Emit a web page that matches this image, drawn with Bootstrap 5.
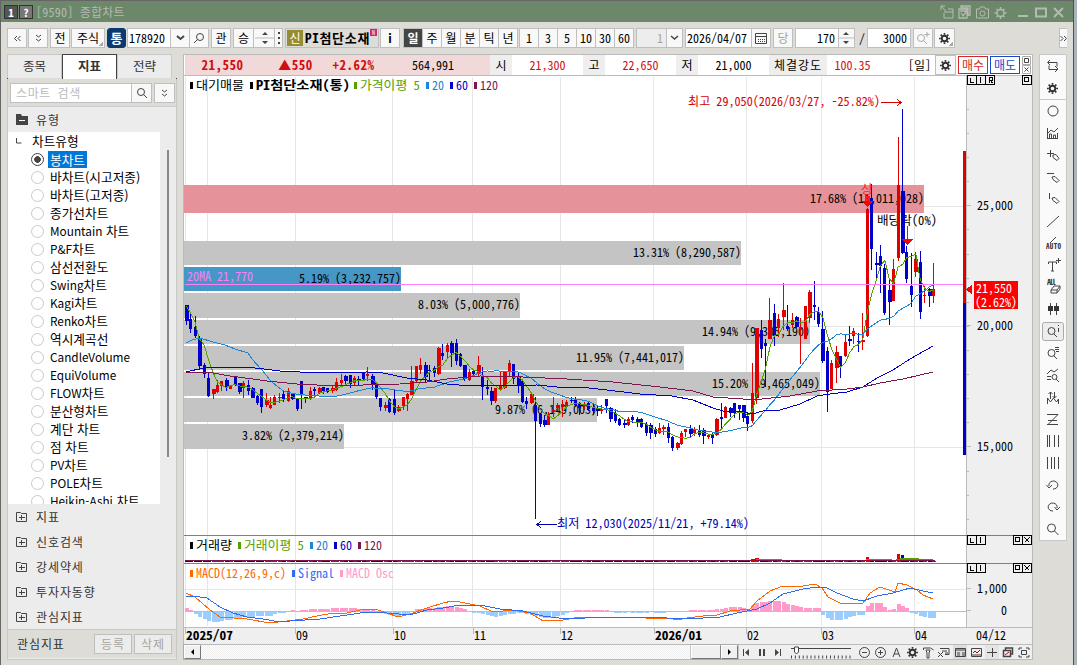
<!DOCTYPE html>
<html lang="ko">
<head>
    <meta charset="UTF-8">
    <meta name="viewport" content="width=device-width, initial-scale=1.0">
    <title>[9590] 종합차트</title>
    <link href="https://cdn.jsdelivr.net/npm/bootstrap@5.3.0/dist/css/bootstrap.min.css" rel="stylesheet">
    <style>
        body {
            width: 1077px;
            height: 665px;
            overflow: hidden;
            background: #dddcd6;
            color: #000;
            font: 12px/14px "Noto Sans CJK KR", "Liberation Sans", sans-serif;
            font-feature-settings: "hwid";
        }
        .window { height: 665px; border-left: 1px solid #666; border-top: 1px solid #666; }
        .edge { width: 4px; background: #a9b3ba; border-left: 1px solid #4b5257; }
        .titlebar { height: 21px; background: #6c876a; color: #b4bcb2; padding-left: 3px; }
        .sq { width: 14px; height: 14px; margin-right: 1px; background: #555; border: 1px solid #333; color: #fff; font-weight: bold; font-size: 11px; line-height: 12px; text-align: center; }
        .sq.q { background: #777; }
        .caption { margin-left: 2px; letter-spacing: .25px; }
        .title-icons { width: 130px; height: 20px; margin-right: 5px; }
        svg { display: block; fill: none; stroke: #444; stroke-width: 1; }

        /* toolbar */
        .tools {
            display: grid;
            grid-template-columns: 21px 22px 21px 36px 20px 84px 22px 20px 21px 11px 95px 23px 116px 117px 49px 88px 22px 62px 10px 46px 21px 125px 8px;
            padding: 6px 0 0 6px;
            height: 32px;
        }
        .tool, .tgroup { height: 20px; margin-right: 1px; background: #f8f8f8; border: 1px solid #bfbfbf; display: flex; align-items: center; justify-content: center; white-space: nowrap; }
        .tgroup > span { flex: 1; height: 18px; line-height: 17px; text-align: center; border-left: 1px solid #bfbfbf; }
        .tgroup > span:first-child { border-left: 0; }
        .tgroup > .on { background: #444; color: #fff; font-weight: bold; }
        .g2 { margin-right: 2px; }
        .g3 { margin-right: 3px; }
        .noline { border-right: 0; margin-right: 0; }
        .tong { background: #0b3a70; color: #fff; border-color: #0b3a70; border-radius: 3px; font-size: 13px; font-weight: bold; }
        .corner { background: linear-gradient(135deg, transparent 50%, #aaa 50%) right 1px bottom 1px/4px 4px no-repeat #f8f8f8; }
        .field { flex: 1; height: 18px; padding: 0 3px 0 1px; background: #fff; line-height: 17px; }
        .field.dim { background: #ededed; }
        .seg { width: 19px; height: 18px; border-left: 1px solid #bfbfbf; display: flex; align-items: center; justify-content: center; }
        .seg.slim { width: 16px; }
        .stock { background: #dddcd6; justify-content: flex-start; }
        .stock b { font-size: 13px; letter-spacing: .7px; }
        .sin { width: 16px; height: 16px; margin: 0 2px 0 1px; background: #978c33; color: #fff; line-height: 15px; text-align: center; }
        .newmark { width: 7px; height: 7px; background: #d6246e; color: #fff; font-size: 6px; line-height: 7px; text-align: center; align-self: flex-start; }
        .off { color: #a8a69c; }

        /* left panel */
        .side { width: 170px; margin-left: 6px; height: 606px; border: 1px solid #c8c8c8; background: #ececec; }
        .side-tabs { height: 25px; border-bottom: 1px solid #444; background: #dddcd6; margin: -1px; }
        .side-tab { width: 55px; height: 24px; border: 1px solid #c8c8c8; border-bottom: 0; background: #ececec; text-align: center; line-height: 22px; font-size: 12.5px; color: #333; }
        .side-tab.sel { height: 25px; background: #fff; border-color: #444; font-weight: bold; }
        .search { height: 29px; background: #dddcd6; padding: 5px 0 0 2px; border-bottom: 1px solid #ccc; }
        .search .tool { width: 21px; }
        .search .ph { width: 121px; margin: 0; justify-content: flex-start; background: #fff; color: #bbb; padding-left: 5px; border-right: 0; letter-spacing: .6px; }
        .cat { height: 25px; padding-left: 8px; gap: 8px; color: #333; letter-spacing: .9px; }
        .tree { height: 372px; overflow: hidden; }
        .tree-list { width: 152px; background: #fff; font-size: 12.7px; line-height: 18px; font-feature-settings: normal; }
        .tree-list em { font-style: normal; font-size: 11.8px; }
        .node { height: 18px; padding-left: 23px; gap: 4px; white-space: nowrap; }
        .node i { width: 13px; height: 13px; border: 1px solid #c9c9c9; border-radius: 50%; }
        .node.sel i { border-color: #444; background: radial-gradient(#444 0 3px, #fff 3.6px); }
        .node span { padding: 0 2px; }
        .node.sel span { background: #0078d7; color: #fff; line-height: 17px; }
        .thumb { width: 2px; height: 307px; margin: 18px 0 0 7px; background: #888; }
        .side-foot { height: 29px; border-top: 1px solid #c8c8c8; background: #dddcd6; padding: 0 4px 0 9px; color: #333; letter-spacing: .9px; }
        .side-foot .tool { width: 38px; margin: 0 0 0 2px; background: #ececec; }

        /* chart column */
        .chart { width: 850px; margin-left: 6px; }
        .quote { height: 22px; border: 1px solid #bbb; background: #fff; line-height: 19px; padding-left: 1px; }
        .quote > span { height: 20px; text-align: center; }
        .pinkbar { width: 305px; background: #f1d9d9; display: grid; grid-template-columns: 75px 71px 45px 114px; }
        .up { color: #d20f0f; }
        .pinkbar b { font-size: 13px; letter-spacing: .5px; white-space: nowrap; }
        .lab { width: 22px; background: #eee; }
        .lab.wide { width: 58px; letter-spacing: .9px; }
        .val { width: 71px; }
        .val2 { width: 51px; }
        .qbtn { width: 30px; height: 18px; margin: 1px 0 0 2px; border: 1px solid; line-height: 15px; background: #fff; text-align: center; }
        .buy { color: #d22828; }
        .sell { color: #1c46d0; }
        .strip { height: 15px; background: #efefef; border: 1px solid #bbb; border-top: 0; }
        .sbtn { width: 17px; height: 14px; background: #f0f0f0; border: 1px solid #fff; border-right-color: #777; border-bottom-color: #777; box-shadow: 0 0 0 .5px #999; }
        .sbtn.long { width: 30px; }
        .track { width: 490px; height: 14px; background: repeating-conic-gradient(#fff 0 25%, #ececec 0 50%) 0 0/2px 2px; }
        #plot text { stroke: none; fill: #000; font-size: 12.5px; white-space: pre; }
        #plot { shape-rendering: crispEdges; overflow: visible; }

        /* right icon bar */
        .rail { width: 28px; height: 487px; margin-left: 6px; background: #fafafa; border: 1px solid #c8c8c8; }
    </style>
</head>
<body>
<div class="d-flex">
    <div class="window flex-grow-1">
        <!-- Title bar -->
        <div class="titlebar d-flex align-items-center">
            <span class="sq">1</span><span class="sq q">?</span>
            <span class="caption flex-grow-1">[9590] 종합차트</span>
            <svg class="title-icons" viewBox="938 1 130 20" style="stroke:#b4bcb2">
                <path d="M941 5l5 5M941 9V5h4M948 8h5v9h-9v-5M944 11h9"/>
                <path d="M961 7V5h9v9h-2M959 8h8v9h-8zM960 10h7M961 12l2 3 3-4M961 7h7v8" stroke-width="1.3"/>
                <path d="M976.500 8h3l1-2h4l1 2h3v9h-12z"/><circle cx="982.500" cy="12.500" r="2.500"/>
                <circle cx="1000.500" cy="12" r="3.500" stroke-width="1.500"/><path d="M1000.500 6v2M1000.500 16v2M994.500 12h2M1004.500 12h2M996.500 8l1 1M1003.500 15l1 1M1004.500 8l-1 1M996.500 16l1-1" stroke-width="1.500"/>
                <path d="M1018 15h10M1036 7.500h10v8h-10zM1054 7l9 9M1063 7l-9 9" style="stroke-width:2"/>
            </svg>
        </div>

        <!-- Toolbar -->
        <div class="tools">
            <div class="tool"><svg width="9" height="9"><path d="M4 2L1.500 4.500 4 7M7.500 2L5 4.500 7.500 7"/></svg></div>
            <div class="tool g2"><svg width="9" height="9"><path d="M2 1l2.500 2L7 1M2 5l2.500 2L7 5"/></svg></div>
            <div class="tool">전</div>
            <div class="tool g2 corner">주식</div>
            <div class="tool tong">통</div>
            <div class="tool g2"><span class="field">178920</span>
                <span class="seg"><svg width="9" height="6"><path d="M1 1l3.500 3L8 1" stroke-width="2"/></svg></span>
                <span class="seg"><svg width="12" height="12"><circle cx="7" cy="5" r="3.500"/><path d="M4.500 7.500L1 11"/></svg></span></div>
            <div class="tool g2">관</div>
            <div class="tool noline">승</div>
            <div class="tool noline"><svg width="19" height="18"><path d="M0 9h19" style="stroke:#bbb"/><path d="M7 6h6L10 3zM7 12h6l-3 3z" fill="#444" stroke="none"/></svg></div>
            <div class="tool g2"><svg width="4" height="14"><path d="M2 1v2M2 6v2M2 11v2" style="stroke-width:2"/></svg></div>
            <div class="tool stock"><span class="sin">신</span><b>PI첨단소재</b><span class="newmark">N</span></div>
            <div class="tool g3"><b>i</b></div>
            <div class="tgroup"><span class="on">일</span><span>주</span><span>월</span><span>분</span><span>틱</span><span>년</span></div>
            <div class="tgroup g2"><span>1</span><span>3</span><span>5</span><span>10</span><span>30</span><span>60</span></div>
            <div class="tool g2"><span class="field dim off text-end">1</span><span class="seg slim"><svg width="9" height="6"><path d="M1 1l3.500 3L8 1" stroke-width="1.500"/></svg></span></div>
            <div class="tool g2"><span class="field">2026/04/07</span><span class="seg"><svg width="12" height="12"><path d="M.5 1.500h11v10H.5zM.5 4.500h11"/><path d="M3 7.500h7M3 9.500h7" stroke-dasharray="1 1"/></svg></span></div>
            <div class="tool g2 off">당</div>
            <div class="tool g2"><span class="field text-end">170</span><span class="seg slim"><svg width="15" height="18"><path d="M0 9h15" style="stroke:#bbb"/><path d="M4 6h6L7 3zM4 12h6l-3 3z" fill="#444" stroke="none"/></svg></span></div>
            <div class="text-center pt-1">/</div>
            <div class="tool g2"><span class="field text-end">3000</span></div>
            <div class="tool"><svg width="14" height="14" style="stroke:#aaa"><circle cx="5" cy="7" r="3.500"/><path d="M7 9l4 4M11 1v5M8.500 3.500h5"/></svg></div>
            <div class="d-flex"><div class="tool corner px-1"><svg width="11" height="11" viewBox="0 0 12 12"><use href="#gear"/></svg></div></div>
            <div class="tool me-0 border-end-0"><svg width="7" height="9"><path d="M.5 2L3 4.500.5 7M4 2l2.500 2.500L4 7"/></svg></div>
        </div>

        <div class="d-flex">
            <!-- Indicator tree -->
            <div class="side">
                <div class="side-tabs d-flex"><div class="side-tab">종목</div><div class="side-tab sel">지표</div><div class="side-tab">전략</div></div>
                <div class="search d-flex"><div class="tool ph">스마트 검색</div>
                    <div class="tool g2"><svg width="12" height="12"><circle cx="5" cy="5" r="3.500"/><path d="M7.500 7.500L11 11"/></svg></div>
                    <div class="tool"><svg width="9" height="9"><path d="M2 1l2.500 2L7 1M2 5l2.500 2L7 5"/></svg></div></div>
                <div class="cat d-flex align-items-center"><svg width="12" height="11"><path d="M0 0h5l1 2h6v9H0z" fill="#444" stroke="none"/><path d="M3 6.500h6" style="stroke:#fff"/></svg>유형</div>
                <div class="tree d-flex"><div class="tree-list" id="tree"></div><div class="thumb"></div></div>
                <div id="cats"></div>
                <div class="side-foot d-flex align-items-center"><span class="flex-grow-1">관심지표</span><div class="tool off">등록</div><div class="tool off">삭제</div></div>
            </div>

            <div class="chart">
                <!-- Quote line -->
                <div class="quote d-flex">
                    <span class="pinkbar"><b class="up">21,550</b><b class="up">▲550</b><b class="up">+2.62%</b><span>564,991</span></span>
                    <span class="lab">시</span><span class="val up">21,300</span>
                    <span class="lab">고</span><span class="val up">22,650</span>
                    <span class="lab">저</span><span class="val">21,000</span>
                    <span class="lab wide">체결강도</span><span class="val2 up">100.35</span>
                    <span class="flex-grow-1 text-end pe-1">[일]</span>
                    <div class="tool mt-0 me-0 px-1"><svg width="11" height="11" viewBox="0 0 12 12"><use href="#gear"/></svg></div>
                    <div class="qbtn buy">매수</div><div class="qbtn sell">매도</div>
                    <svg width="12" height="20"><path d="M2.500 1.500h8v8h-8zM2.500 10.500h8v8h-8z" style="stroke:#aaa"/><path d="M4.500 3.500h4v4h-4zM4.500 12.500l4 4M8.500 12.500l-4 4"/></svg>
                </div>
                <svg id="plot" width="850" height="569" viewBox="183 76 850 569"></svg>
                <!-- Scroll strip -->
                <div class="strip d-flex">
                    <div class="sbtn"><svg width="15" height="12"><path d="M6 6l3-3v6z" fill="#000" stroke="none"/></svg></div>
                    <div class="track"></div>
                    <div class="sbtn long"></div>
                    <div class="sbtn"><svg width="15" height="12"><path d="M9 6L6 3v6z" fill="#000" stroke="none"/></svg></div>
                    <svg width="294" height="14" viewBox="738 645 294 14">
                        <path d="M743.500 649v7M780.500 649v7"/><path d="M749 649v7l-4-3.500zM775 649v7l4-3.500z" fill="#444" stroke="none"/>
                        <path d="M760 649v7M764 649v7" style="stroke-width:2"/>
                        <path d="M791 648.500h60"/><path d="M791 657h61" style="stroke-width:3" stroke-dasharray="1 2.900"/><path d="M794.500 647h4v5l-2 2-2-2z" fill="#fff"/>
                        <circle cx="864.500" cy="652.500" r="5"/><path d="M862 652.500h5"/>
                        <circle cx="880.500" cy="652.500" r="5"/><path d="M878 652.500h5M880.500 650v5"/>
                        <path d="M893 657l3.500-9 3.500 9M894 654h5"/>
                        <svg x="907" y="647" width="11" height="11" viewBox="0 0 12 12"><use href="#gear"/></svg>
                        <path d="M923.500 650v-2h7l3 2M926 650h4l-1 3v5h-2v-5z" />
                        <path d="M940 648.500h9v6h-4M938 652l5 5M943 652l-5 5M942 651h5M945 653h3"/>
                        <path d="M953 645h14v14h-14z" fill="#ddd" stroke="none"/><path d="M955.500 648.500h10v8h-10zM955 650h11M957 653h3M962 653h3M957 655h3M962 655h3"/>
                        <path d="M971.500 648.500h10v8h-10zM971 655h11"/><path d="M973 653l2-2 2 2 3-3" style="stroke:#c00"/>
                        <path d="M985 645h14v14h-14z" fill="#e4e4e4" stroke="none"/><path d="M987 652.500h10M992.500 648v9"/>
                        <path d="M1005.500 650v-2h7v6h-2M1003.500 650.500h7v6h-7z" stroke-width="1.500"/><path d="M1005 655l4-3" style="stroke:#c00"/>
                        <path d="M1019 650v-2h3M1026 648h3v2M1029 655v2h-3M1022 657h-3v-2M1021.500 650.500h5v4h-5z"/>
                    </svg>
                </div>
            </div>

            <!-- Drawing tools -->
            <div class="rail">
                <svg width="26" height="485" viewBox="1040 55 26 485">
                    <defs><g id="gear" style="stroke:#333"><circle cx="6" cy="6" r="3" style="stroke-width:2"/><path d="M6 0v2M6 10v2M0 6h2M10 6h2M1.800 1.800l1.400 1.400M8.800 8.800l1.400 1.400M10.200 1.800L8.800 3.200M1.800 10.200l1.400-1.400" style="stroke-width:1.8"/></g></defs>
                    <path d="M1040 99.500h26" style="stroke:#c8c8c8"/>
                    <path d="M1050 60l-2.500 2.500 2.500 2.500M1048 62.500h9v4M1055 66l3 3-3 3M1057 69.500h-8v-4"/>
                    <svg x="1047" y="83" width="11" height="11" viewBox="0 0 12 12"><use href="#gear"/></svg>
                    <circle cx="1053" cy="111" r="5"/>
                    <path d="M1047.500 128v11M1047 138.500h11M1049.500 138v-4h2v4M1053.500 138v-3h2v3M1057.500 138v-5M1048 133l3-3 3 2 4-4"/>
                    <path d="M1047 153.500h7M1050.500 150v7M1053 155l3-.5 3 4-2 2-4-3z"/>
                    <path d="M1047 173.500h7M1052 177l3-.5 4 4-2 2-4-3z"/>
                    <path d="M1049.500 193v6M1052 198l3-.5 4 4-2 2-4-3z"/>
                    <path d="M1047 227l12-11"/>
                    <path d="M1050 243l6-6"/>
                    <path d="M1048.500 264v-2h8v2M1052.500 262v9M1051 271h3M1058.500 258v5M1056 260.500h5"/>
                    <path d="M1051 290l3-4h6l-3 4zM1051 290v3h6v-3M1057 293l3-4v-3"/>
                    <path d="M1050.500 303v12M1056.500 303v12"/><path d="M1048 306h5v5h-5zM1054 306h5v5h-5z" fill="#333" stroke="none"/>
                    <rect x="1042.500" y="322.500" width="21" height="18" rx="2" fill="#ededed" style="stroke:#aaa"/>
                    <circle cx="1051.500" cy="331" r="3.500"/><path d="M1054 334l3 3M1058.500 325v1M1058.500 328v4"/>
                    <circle cx="1051.500" cy="353" r="3.500"/><path d="M1054 356l3 3M1055 347.500h4M1055 349.500h4M1056 351.500h3"/>
                    <path d="M1047 374l4-4 3 2 4-3M1047 376.500h4M1047 379.500h4"/><circle cx="1054.500" cy="377" r="2.500"/><path d="M1056 379l3 3"/>
                    <path d="M1047.500 404v-6l3 4 3-4 3 4 2-3v5M1050.500 392v7M1048.500 394l2-2 2 2M1054.500 392v6M1052.500 396l2 2 2-2"/>
                    <path d="M1047 414.500h11M1047 424.500h11M1058 414.500l-10 10M1048 420.500h9"/>
                    <path d="M1047.500 435v12M1049.500 435v12M1054.500 435v12M1058.500 435v12M1047.500 457v12M1051.500 457v12M1054.500 457v12M1058.500 457v12"/>
                    <path d="M1049 486a4.500 4 0 1 1 4 3M1046.500 485l2.500 3 3-3"/>
                    <path d="M1057 508a4.500 4 0 1 0-4 3M1054.500 507l2.500 3 3-3"/>
                    <circle cx="1051.500" cy="528" r="4"/><path d="M1054.500 531l4 4"/>
                    <g fill="#333" style="stroke:none" font-weight="bold"><text x="1046" y="249" font-size="7" textLength="15">AUTO</text><text x="1047" y="285" font-size="8" textLength="9">All</text></g>
                </svg>
            </div>
        </div>
    </div>
    <div class="edge"></div>
</div>

<script src="https://cdn.jsdelivr.net/npm/bootstrap@5.3.0/dist/js/bootstrap.bundle.min.js"></script>
<script>
    // Tree and folders
    const kinds = ["봉차트", "바차트(시고저종)", "바차트(고저종)", "종가선차트", "Mountain 차트", "P&F차트", "삼선전환도",
        "Swing차트", "Kagi차트", "Renko차트", "역시계곡선", "CandleVolume", "EquiVolume", "FLOW차트", "분산형차트",
        "계단 차트", "점 차트", "PV차트", "POLE차트", "Heikin-Ashi 차트"];
    let html = '<div class="d-flex align-items-center ps-2"><svg width="16" height="16"><path d="M.5 5v5h5"/></svg><span>차트유형</span></div>';
    kinds.forEach((k, i) => {
        const label = k.replace(/[A-Za-z&-]+/g, m => `<em>${m.replace("&", "&amp;")}</em>`);
        html += `<div class="node d-flex align-items-center${i ? "" : " sel"}"><i></i><span>${label}</span></div>`;
    });
    document.getElementById("tree").innerHTML = html;
    document.getElementById("cats").innerHTML = ["지표", "신호검색", "강세약세", "투자자동향", "관심지표"].map(c =>
        `<div class="cat d-flex align-items-center"><svg width="12" height="12"><path d="M.5 1.500h4l1 1h5v8H.5zM3 6.500h6M5.500 4v5"/></svg>${c}</div>`).join("");

    // Candles: direction, high, top, bottom, low
    const candles = `b305,305,321,325 b314,319,329,333 b316,327,336,338 b336,338,366,370 b363,365,374,378 b373,378,396,397 r389,389,394,399
r380,385,392,393 r381,381,386,391 b378,380,387,391 r385,385,389,389 b377,377,385,386 b383,383,392,394 r381,383,388,398 b380,385,391,395
b387,388,398,398 b395,396,403,405 b389,389,407,413 r393,400,405,407 r397,405,408,409 r395,397,405,405 r393,397,398,403 b391,394,399,402
r388,391,401,402 b393,393,399,400 b398,398,409,411 b381,381,395,409 b397,397,399,403 r387,391,399,400 b387,389,391,395 r387,388,393,394
b387,387,391,394 b388,388,392,393 r385,388,391,393 r378,382,390,391 r374,380,383,385 b375,376,381,385 b375,375,384,388 r376,378,383,385
b376,379,380,385 b372,373,379,381 r367,374,376,381 b374,376,385,390 b382,383,397,399 b398,398,407,411 r402,405,408,411 b398,399,412,413
b390,399,413,415 r405,407,411,412 r397,397,406,410 r393,394,399,411 r366,381,395,395 r366,366,381,383 r358,365,370,374 b362,365,377,382
b365,370,371,381 b366,368,373,377 r347,348,374,375 b344,353,356,360 r343,345,352,358 b341,343,353,367 b339,343,361,365 b353,354,366,367
b365,365,379,381 r369,372,380,381 b369,371,374,377 r356,365,374,376 b367,377,387,400 b380,387,389,395 b387,391,401,405 r388,388,401,403
r372,386,389,389 r371,371,388,389 r360,363,372,376 b364,364,379,384 b373,377,385,393 b381,381,402,403 b397,401,404,409 r393,394,403,404
b397,405,421,519 b413,414,424,427 b415,420,425,427 r412,414,425,425 r397,410,412,417 r403,405,408,411 r400,404,407,417 r400,402,407,408
b397,400,401,403 b397,399,405,407 b402,403,408,415 r402,405,406,410 b402,403,409,411 b403,407,411,415 b405,408,411,416 r405,409,411,414
b399,399,406,413 b407,408,419,422 b409,413,421,423 b418,419,425,426 b420,423,425,428 r417,419,425,426 b415,417,420,423 b417,419,422,427
b418,419,427,428 b422,424,433,436 b423,425,433,439 b427,429,434,437 r423,428,433,434 r425,427,429,435 b423,427,438,443 b436,437,448,451
r442,443,448,450 r431,433,444,445 r429,429,432,437 b425,429,434,437 r427,430,433,436 b425,430,435,437 b428,430,436,444 r434,435,437,439
b433,434,438,444 r418,419,435,436 b403,417,419,429 r406,407,418,418 b407,408,413,417 b403,403,413,418 b405,405,409,420 b405,405,418,422
b413,416,424,431 r363,393,421,423 r328,328,398,404 b320,330,349,358 b339,343,346,387 r298,320,339,339 b304,313,336,346 r314,319,328,337
r283,310,317,330 b305,326,329,331 r313,320,325,328 b316,317,327,328 r318,327,330,364 r306,306,339,339 r290,292,318,323 b281,305,307,320
b307,312,324,327 b311,329,361,363 b347,351,392,412 r360,363,389,389 r346,352,368,383 b356,356,367,378 r335,342,356,357 b326,339,341,346
r328,331,336,344 b333,341,342,352 r313,340,342,350 r208,209,336,337 b184,198,249,270 b252,263,265,278 b245,256,266,293 b264,268,313,315
b279,290,302,325 r259,269,301,301 r137,185,258,261 b109,191,253,254 b246,252,279,283 b253,286,295,307 r252,259,272,277 b251,262,312,319
r286,295,296,303 b288,289,296,307 r263,289,296,303`.split(/\s+/).map(s => [s[0], ...s.slice(1).split(",").map(Number)]);
    const osc = [3,1,-2,-5,-7,-9,-10,-10,-9,-8,-8,-7,-7,-5,-5,-5,-4,-4,-4,-4,-2,-1,-1,0,1,0,1,1,2,2,2,2,2,3,3,3,3,3,3,2,2,2,2,0,-1,-2,-3,-4,-4,-4,-2,
        0,2,2,3,3,3,4,4,5,5,4,3,2,0,-1,-1,-2,-3,-4,-5,-4,-3,-2,-2,-1,-1,-2,-3,-4,-5,-6,-6,-5,-4,-3,-1,0,1,1,1,1,1,1,1,1,0,-1,-1,-1,0,-1,-1,-1,-1,0,-1,-1,-1,
        0,0,0,0,0,1,1,1,1,1,1,2,2,3,4,4,4,3,2,5,8,9,9,10,10,10,9,7,6,5,4,3,3,3,3,-3,-6,-8,-8,-8,-7,-5,-4,-3,-3,5,8,8,8,4,1,2,7,5,3,-1,-2,-4,-5,-6,-6];
    const RED = "#e00000", BLUE = "#0000c8", GREEN = "#55a000", SKY = "#1b85d8", WINE = "#7d164f";
    const cx = i => 186.5 + i * 4.42;
    const out = [];
    const rect = (x, y, w, h, c) => out.push(`<rect x="${x}" y="${y}" width="${w}" height="${h}" style="fill:${c};stroke:none"/>`);
    const line = (d, c) => out.push(`<path d="${d}" style="stroke:${c}"/>`);
    const poly = (pts, c) => line("M" + pts.map(p => p.join(" ")).join("L"), c);
    // half-width characters take one cell, Hangul takes two
    const put = (x, y, s, c = "#000", bold = false, end = false) => {
        let w = 0;
        for (const ch of s) w += (ch > "\u1100" ? 2 : 1) * (bold ? 6.7 : 6);
        out.push(`<text x="${end ? x - w : x}" y="${y}" textLength="${w}" lengthAdjust="spacingAndGlyphs" style="fill:${c}${bold ? ";font-weight:bold" : ""}">${s}</text>`);
    };

    rect(184, 76, 782, 551, "#fff");
    rect(967, 76, 65, 551, "#efefef");
    rect(184, 627, 848, 18, "#efefef");
    [185, 207, 295, 392, 472, 560, 653, 746, 821, 914].forEach(x => rect(x, 77, 1, 549, "#e6e6e6"));
    [206, 326, 447, 589].forEach(y => rect(184, y, 782, 1, "#e6e6e6"));

    // Volume by price
    [[185, 28, 924, "#e5929a"], [241, 24, 741], [267, 24, 401, "#4697c5"], [293, 25, 520], [320, 24, 810],
     [346, 24, 684], [372, 24, 820], [398, 24, 597], [424, 25, 344]].forEach(b => rect(184, b[0], b[2] - 184, b[1], b[3] || "#c4c4c4"));
    [[203, 924, "17.68% (11,011,028)"], [257, 741, "13.31% (8,290,587)"], [283, 401, "5.19% (3,232,757)"], [309, 520, "8.03% (5,000,776)"],
     [336, 810, "14.94% (9,305,190)"], [362, 684, "11.95% (7,441,017)"], [388, 820, "15.20% (9,465,049)"], [414, 597, "9.87% (6,149,003)"],
     [440, 344, "3.82% (2,379,214)"]].forEach(t => put(t[1], t[0], t[2], "#000", false, true));
    put(877, 225, "배당락(0%)");

    candles.forEach(([d, hi, top, bot, lo], i) => {
        const x = Math.round(cx(i) - .5), c = d === "r" ? RED : BLUE;
        rect(x, hi, 1, Math.max(1, lo - hi), c);
        rect(x - 1, top, i % 3 ? 3 : 4, Math.max(1, bot - top), c);
        rect(x - 1, 561, 4, 1, c);
        const h = osc[i];
        if (h) rect(x - 1, h > 0 ? 611 - h : 612, 4, Math.abs(h), h > 0 ? "#ff9acb" : "#9bceff");
    });

    // Moving averages
    const close = candles.map(k => k[0] === "r" ? k[2] : k[3]);
    const ma = (n, from) => close.map((_, i) => [cx(i), close.slice(Math.max(0, i - n + 1), i + 1).reduce((a, b) => a + b) / Math.min(n, i + 1)]).slice(from);
    poly([[186.5,306],[191,314],[195,322],[199,338],...ma(5, 4)], GREEN);
    poly([[186,343],[192,340],[200,338],[213,342],[225,345],[235,349],[248,353],[252,359],[262,370],...ma(20, 19)], SKY);
    poly([[186,372],[203,368],[213,367],[247,367],[280,371],[320,373],[367,372],[383,373],[407,378],[427,380],[447,384],[470,386],[537,385],[557,387],[580,387],[607,390],[640,394],[672,396],[693,400],[713,408],[723,411],[740,411],[752,414],[763,411],[780,410],[800,404],[817,396],[830,394],[847,392],[863,387],[877,378],[893,370],[910,359],[933,346]], BLUE);
    poly([[186,373],[197,372],[213,373],[230,376],[253,379],[267,381],[297,384],[317,385],[363,385],[400,384],[427,382],[447,379],[480,376],[523,377],[567,379],[613,382],[660,387],[693,391],[713,397],[743,399],[762,399],[790,396],[817,391],[847,389],[863,387],[880,383],[903,379],[933,372]], WINE);
    rect(185, 284, 781, 1, "#ff7dff");
    put(187, 281, "20MA 21,770", "#ff7dff");

    // High, low and event marks
    put(688, 106, "최고 29,050(2026/03/27, -25.82%)", "#d80000");
    line("M881 102.500h20M897 99l4 3.500-4 3.500", "#d80000");
    put(557, 528, "최저 12,030(2025/11/21, +79.14%)", "#0000b8");
    line("M557 524.500h-20M541 521l-4 3.500 4 3.500", "#0000b8");
    put(861, 194, "상", "#ff2020");
    rect(865, 196, 5, 5, "#ff1a1a");
    out.push('<path d="M862 201h11l-5.500 6zM902 239h11l-5.500 6z" style="fill:#f00;stroke:none"/>');
    rect(907, 226, 1, 14, "#f00");

    // Volume panel
    rect(185, 560, 750, 1, WINE);
    rect(751, 559, 4, 2, RED); rect(755, 558, 4, 2, RED); rect(756, 559, 26, 1, GREEN);
    rect(866, 557, 3, 4, RED); rect(866, 559, 26, 1, GREEN);
    rect(897, 554, 3, 7, RED); rect(901, 555, 3, 5, BLUE); rect(900, 558, 19, 1, GREEN); rect(896, 559, 37, 1, SKY);

    // MACD panel
    rect(185, 611, 781, 1, "#ff9acb");
    poly([[186,593],[195,597],[210,610],[220,617],[247,619],[270,623],[287,621],[303,619],[317,616],[333,613],[347,613],[360,610],[375,609],[387,613],[398,617],[410,614],[427,608],[443,603],[452,601],[460,602],[480,606],[493,612],[513,610],[530,613],[543,621],[563,620],[580,617],[640,617],[653,619],[670,618],[677,620],[687,618],[703,616],[717,615],[730,611],[750,609],[757,601],[770,591],[783,586],[803,586],[815,584],[822,588],[828,597],[840,603],[863,603],[870,593],[880,587],[895,592],[898,583],[907,585],[917,590],[923,595],[933,599]], "#ff6600");
    poly([[186,597],[193,596],[207,598],[220,607],[233,613],[247,617],[263,619],[280,622],[290,621],[320,619],[347,615],[367,612],[387,613],[410,615],[427,610],[443,608],[460,605],[480,605],[500,609],[523,611],[543,616],[567,619],[603,617],[653,617],[680,619],[703,618],[720,617],[737,613],[757,609],[770,603],[783,594],[803,589],[818,587],[827,588],[837,593],[853,599],[863,601],[877,596],[893,593],[910,588],[923,591],[933,593]], "#2f6bf0");

    // Legends
    const legend = (y, items) => items.forEach(([x, s, c, b]) => { rect(x, y - 8, 3, 7, c); put(x + 6, y, s, c, b); });
    legend(90, [[190, "대기매물", "#000"], [250, "PI첨단소재(통)", "#000", true], [354, "가격이평 5", GREEN], [426, "20", SKY], [450, "60", BLUE], [474, "120", WINE]]);
    legend(550, [[190, "거래량", "#000"], [238, "거래이평 5", GREEN], [310, "20", SKY], [334, "60", BLUE], [358, "120", WINE]]);
    legend(578, [[190, "MACD(12,26,9,c)", "#ff6600"], [292, "Signal", "#2f6bf0"], [340, "MACD Osc", "#ff9acb"]]);

    // Axes
    rect(966, 76, 1, 551, "#bbb");
    rect(963, 151, 3, 152, RED);
    rect(963, 303, 3, 152, BLUE);
    for (let y = 109; y < 535; y += 24.1) rect(967, Math.round(y), 2, 1, "#bbb");
    [[205, "25,000"], [325, "20,000"], [446, "15,000"], [588, "1,000"], [610, "0"]].forEach(([y, s]) => {
        rect(967, y, 4, 1, "#bbb");
        put(y < 500 ? 1013 : 1007, y + 5, s, "#000", false, true);
    });
    out.push('<path d="M966 289.500l6-5v10z" style="fill:#f00;stroke:none"/>');
    rect(974, 281, 44, 28, "#f00");
    put(976, 293, "21,550", "#fff");
    put(975, 307, "(2.62%)", "#fff");
    rect(183, 535, 849, 1, "#808080");
    rect(183, 563, 849, 1, "#808080");
    rect(183, 627, 849, 1, "#bbb");
    rect(183, 644, 849, 1, "#bbb");
    rect(183, 76, 1, 569, "#bbb");
    rect(1032, 76, 1, 569, "#bbb");
    [[186, "2025/07", 1], [296, "09"], [394, "10"], [474, "11"], [561, "12"], [655, "2026/01", 1], [747, "02"], [822, "03"], [915, "04"], [976, "04/12"]].forEach(([x, s, b]) => {
        if (x < 966) rect(x - 1, 628, 1, 6, "#bbb");
        put(x, 640, s, "#000", !!b);
    });

    // Panel corner buttons
    const corner = (y, top) => {
        const letters = "M3.500 2.500v5h3M13.500 2v6";
        const g = top ? "M.5 .5h27v9H.5zM9.500 .5v9M18.500 .5v9M22.500 8V2.500h2.500v3h-2.500M23.500 5.500l2 2.500" : "M.5 .5h18v9H.5zM9.500 .5v9";
        const sq = top ? "M55.500 .5h9v9h-9zM57.500 2.500h4v4h-4z" : "M46.500 .5h18v9h-18zM55.500 .5v9M48.500 2.500h4v4h-4zM57.500 2.500l5 5M62.500 2.500l-5 5";
        out.push(`<path transform="translate(967 ${y})" d="${g}${letters}${sq}" style="stroke:#000"/>`);
    };
    corner(75, true); corner(535); corner(563);
    document.getElementById("plot").innerHTML = out.join("");
</script>
</body>
</html>
